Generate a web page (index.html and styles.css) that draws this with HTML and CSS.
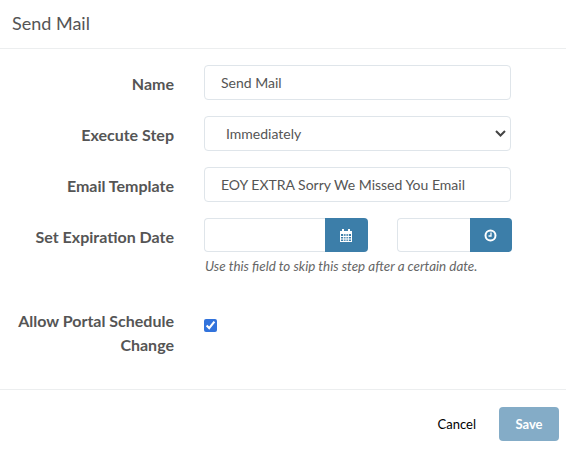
FILE: index.html
```html
<!DOCTYPE html>
<html lang="en">
<head>
  <meta charset="UTF-8">
  <meta name="viewport" content="width=device-width, initial-scale=1">
  <title>Send Mail</title>
  <link rel="stylesheet" href="styles.css">
</head>
<body>
  <div class="modal">
    <div class="modal-header">
      <h1>Send Mail</h1>
    </div>

    <div class="modal-body">
      <div class="form-row">
        <label class="form-label">Name</label>
        <input type="text" class="form-input" value="Send Mail">
      </div>
      <div class="form-row">
        <label class="form-label">Execute Step</label>
        <select class="form-input form-select">
          <option>Immediately</option>
        </select>
      </div>
      <div class="form-row">
        <label class="form-label">Email Template</label>
        <input type="text" class="form-input" value="EOY EXTRA Sorry We Missed You Email">
      </div>
      <div class="form-row expire-row">
        <label class="form-label">Set Expiration Date</label>
        <div class="expire-field">
          <div class="expire-inputs">
            <div class="input-group date-group">
              <input type="text" class="form-input">
              <button class="addon">
                <svg width="12" height="13" viewBox="0 0 12 13">
                  <path fill="#fff" d="M0 2h2V0h2v2h4V0h2v2h2v11H0zm1 3v7h10V5z"/>
                  <path fill="#fff" d="M1 7h10v1H1zm0 2.500h10v1H1zM3.200 5h1v7h-1zm2.300 0h1v7h-1zm2.300 0h1v7h-1z"/>
                </svg>
              </button>
            </div>
            <div class="input-group time-group">
              <input type="text" class="form-input">
              <button class="addon">
                <svg width="13" height="13" viewBox="0 0 13 13">
                  <circle cx="6.500" cy="6.500" r="5" fill="none" stroke="#fff" stroke-width="2"/>
                  <path fill="none" stroke="#fff" stroke-width="1.300" d="M7 3.500v3.500H4.500"/>
                </svg>
              </button>
            </div>
          </div>
          <p class="help-text">Use this field to skip this step after a certain date.</p>
        </div>
      </div>
      <div class="form-row check-row">
        <label class="form-label">Allow Portal Schedule Change</label>
        <input type="checkbox" class="form-check" checked>
      </div>
    </div>

    <div class="modal-footer">
      <a href="#" class="cancel-link">Cancel</a>
      <button class="save-btn">Save</button>
    </div>
  </div>
</body>
</html>
```

FILE: styles.css
```css
* {
  margin: 0;
  padding: 0;
  box-sizing: border-box;
}
body {
  font-family: Lato, sans-serif;
  font-size: 14px;
  color: #555;
  background-color: white;
}
.modal-header {
  height: 49px;
  padding: 12px 12px 0;
  border-bottom: 1px solid #eceeef;
}
.modal-header h1 {
  font-size: 18px;
  font-weight: 400;
  line-height: 22px;
}
.modal-body {
  height: 340px;
  padding-top: 16px;
}
.form-row {
  display: flex;
  height: 35px;
  margin-bottom: 16px;
}
.form-label {
  width: 174px;
  margin-right: 30px;
  flex-shrink: 0;
  text-align: right;
  font-size: 16px;
  font-weight: 700;
  line-height: 38px;
}
.form-input {
  width: 307px;
  height: 35px;
  padding: 0 16px;
  border: 1px solid #dfe5ea;
  border-radius: 4px;
  background: white;
  color: #555;
  font-family: Lato, sans-serif;
  font-size: 14px;
}
.form-select {
  appearance: none;
  padding-left: 21px;
  background: white url("data:image/svg+xml,%3Csvg xmlns='http://www.w3.org/2000/svg' width='11' height='7'%3E%3Cpath d='M1 1l4.500 4.500L10 1' fill='none' stroke='%23444' stroke-width='2'/%3E%3C/svg%3E") no-repeat right 4px center;
}
.expire-row {
  height: auto;
  margin-bottom: 0;
}
.expire-inputs {
  display: flex;
  gap: 29px;
}
.input-group {
  display: flex;
}
.input-group .form-input {
  height: 34px;
  border-radius: 4px 0 0 4px;
  border-right: none;
}
.date-group .form-input {
  width: 121px;
}
.time-group .form-input {
  width: 73px;
}
.addon {
  display: flex;
  align-items: center;
  justify-content: center;
  width: 43px;
  height: 34px;
  padding-right: 1px;
  border: none;
  border-radius: 0 4px 4px 0;
  background-color: #3c7ea9;
}
.time-group .addon {
  width: 42px;
}
.help-text {
  margin-top: 4px;
  padding-left: 1px;
  font-size: 13.4px;
  font-style: italic;
  line-height: 20px;
  color: #666;
}
.check-row {
  height: auto;
  margin-top: 33px;
}
.check-row .form-label {
  line-height: 24px;
}
.form-check {
  width: 13px;
  height: 13px;
  margin-top: 10px;
  accent-color: #3273dc;
}
.modal-footer {
  display: flex;
  justify-content: flex-end;
  align-items: center;
  height: 61px;
  padding: 7px 7px 0 0;
  border-top: 1px solid #eceeef;
}
.cancel-link {
  margin-right: 23px;
  color: black;
  font-size: 13px;
  text-decoration: none;
}
.save-btn {
  width: 60px;
  height: 34px;
  border: none;
  border-radius: 4px;
  background-color: #84acc7;
  color: white;
  font-family: Lato, sans-serif;
  font-size: 13px;
  font-weight: 700;
}
```
